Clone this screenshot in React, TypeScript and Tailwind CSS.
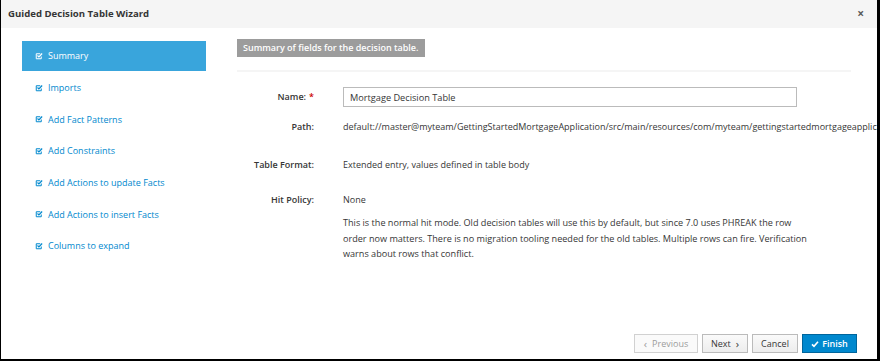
import React from 'react';

const steps = [
  'Summary',
  'Imports',
  'Add Fact Patterns',
  'Add Constraints',
  'Add Actions to update Facts',
  'Add Actions to insert Facts',
  'Columns to expand',
];

const CheckSquare: React.FC<{ className?: string }> = ({ className }) => (
  <svg viewBox="0 0 16 16" className={className} fill="none" stroke="currentColor">
    <path d="M12.5 9v4.5h-10v-10h8" strokeWidth="2" />
    <path d="M5 7l2.8 2.8 6.5-6.8" strokeWidth="2.4" />
  </svg>
);

const Row: React.FC<{ label: React.ReactNode; children: React.ReactNode; className?: string }> = ({ label, children, className }) => (
  <div className={`flex leading-[14px] ${className ?? ''}`}>
    <div className="w-[77px] shrink-0 text-right font-semibold text-[#363636]">{label}</div>
    <div className="ml-[29px] flex-1 whitespace-nowrap">{children}</div>
  </div>
);

export default function App() {
  return (
    <div
      className="w-[880px] h-[361px] overflow-hidden bg-white border-l border-r-[3px] border-b-2 border-black flex flex-col text-[9px] text-[#363636]"
      style={{ fontFamily: '"Open Sans", "Noto Sans", sans-serif' }}
    >
      <div className="h-[28px] shrink-0 bg-[#f5f5f5] flex items-center justify-between pl-[7px] pr-[13px]">
        <span className="text-[9.6px] font-bold text-[#363636]">Guided Decision Table Wizard</span>
        <span className="text-[12px] font-bold text-[#5a5a5a] leading-none">×</span>
      </div>

      <div className="flex-1 flex pt-[13px] pl-[21px] min-h-0">
        <ul className="w-[184px] shrink-0 flex flex-col gap-[1.7px]">
          {steps.map((s, i) => (
            <li
              key={s}
              className={`h-[30px] flex items-center pl-[13px] gap-[5px] ${
                i === 0 ? 'bg-[#39a5dc] text-white' : 'text-[#0088ce]'
              }`}
            >
              <CheckSquare className="w-[8px] h-[8px]" />
              <span>{s}</span>
            </li>
          ))}
        </ul>

        <div className="flex-1 flex flex-col ml-[31px] min-w-0">
          <div className="flex-1 min-h-0">
            <div className="inline-block bg-[#9c9c9c] text-white font-semibold px-[6px] h-[18px] leading-[18px] -mt-[2px]">
              Summary of fields for the decision table.
            </div>
            <div className="mt-[13px] h-[2px] w-[614px] bg-[#f5f5f5]" />

            <div className="mt-[15px]">
              <Row label={<>Name:<span className="text-[#cc0000] ml-[3px]">*</span></>} className="items-center">
                <input
                  readOnly
                  value="Mortgage Decision Table"
                  className="w-[454px] h-[20px] border border-[#bbbbbb] px-[6px] text-[9.2px] text-[#363636] outline-none"
                  style={{ fontFamily: '"Open Sans", "Noto Sans", sans-serif' }}
                />
              </Row>
              <Row label="Path:" className="mt-[13px]">
                default://master@myteam/GettingStartedMortgageApplication/src/main/resources/com/myteam/gettingstartedmortgageapplication/Mortgage Decision Table.gdst
              </Row>
              <Row label="Table Format:" className="mt-[24px]">
                Extended entry, values defined in table body
              </Row>
              <Row label="Hit Policy:" className="mt-[21px]">
                <div>None</div>
                <div className="mt-[8px] leading-[15.5px] text-[9.1px]">
                  This is the normal hit mode. Old decision tables will use this by default, but since 7.0 uses PHREAK the row
                  <br />
                  order now matters. There is no migration tooling needed for the old tables. Multiple rows can fire. Verification
                  <br />
                  warns about rows that conflict.
                </div>
              </Row>
            </div>
          </div>

          <div className="flex justify-end gap-[4px] pr-[20px] pb-[6px]">
            <button className="h-[19px] w-[64px] border border-[#d1d1d1] bg-[#fafafa] text-[#9c9c9c] flex items-center justify-center gap-[5px]">
              <span className="text-[11px] leading-none">‹</span> Previous
            </button>
            <button className="h-[19px] w-[46px] border border-[#bbbbbb] bg-gradient-to-b from-[#fafafa] to-[#ededed] text-[#363636] flex items-center justify-center gap-[5px]">
              Next <span className="text-[11px] leading-none">›</span>
            </button>
            <button className="h-[19px] w-[46px] border border-[#bbbbbb] bg-gradient-to-b from-[#fafafa] to-[#ededed] text-[#363636]">
              Cancel
            </button>
            <button className="h-[19px] w-[55px] border border-[#00659c] bg-[#0088ce] text-white font-semibold flex items-center justify-center gap-[3px]">
              <svg viewBox="0 0 12 12" className="w-[8px] h-[8px]" fill="none" stroke="currentColor" strokeWidth="2.4">
                <path d="M1.5 6.5l3 3 6-7" />
              </svg>
              Finish
            </button>
          </div>
        </div>
      </div>
    </div>
  );
}
